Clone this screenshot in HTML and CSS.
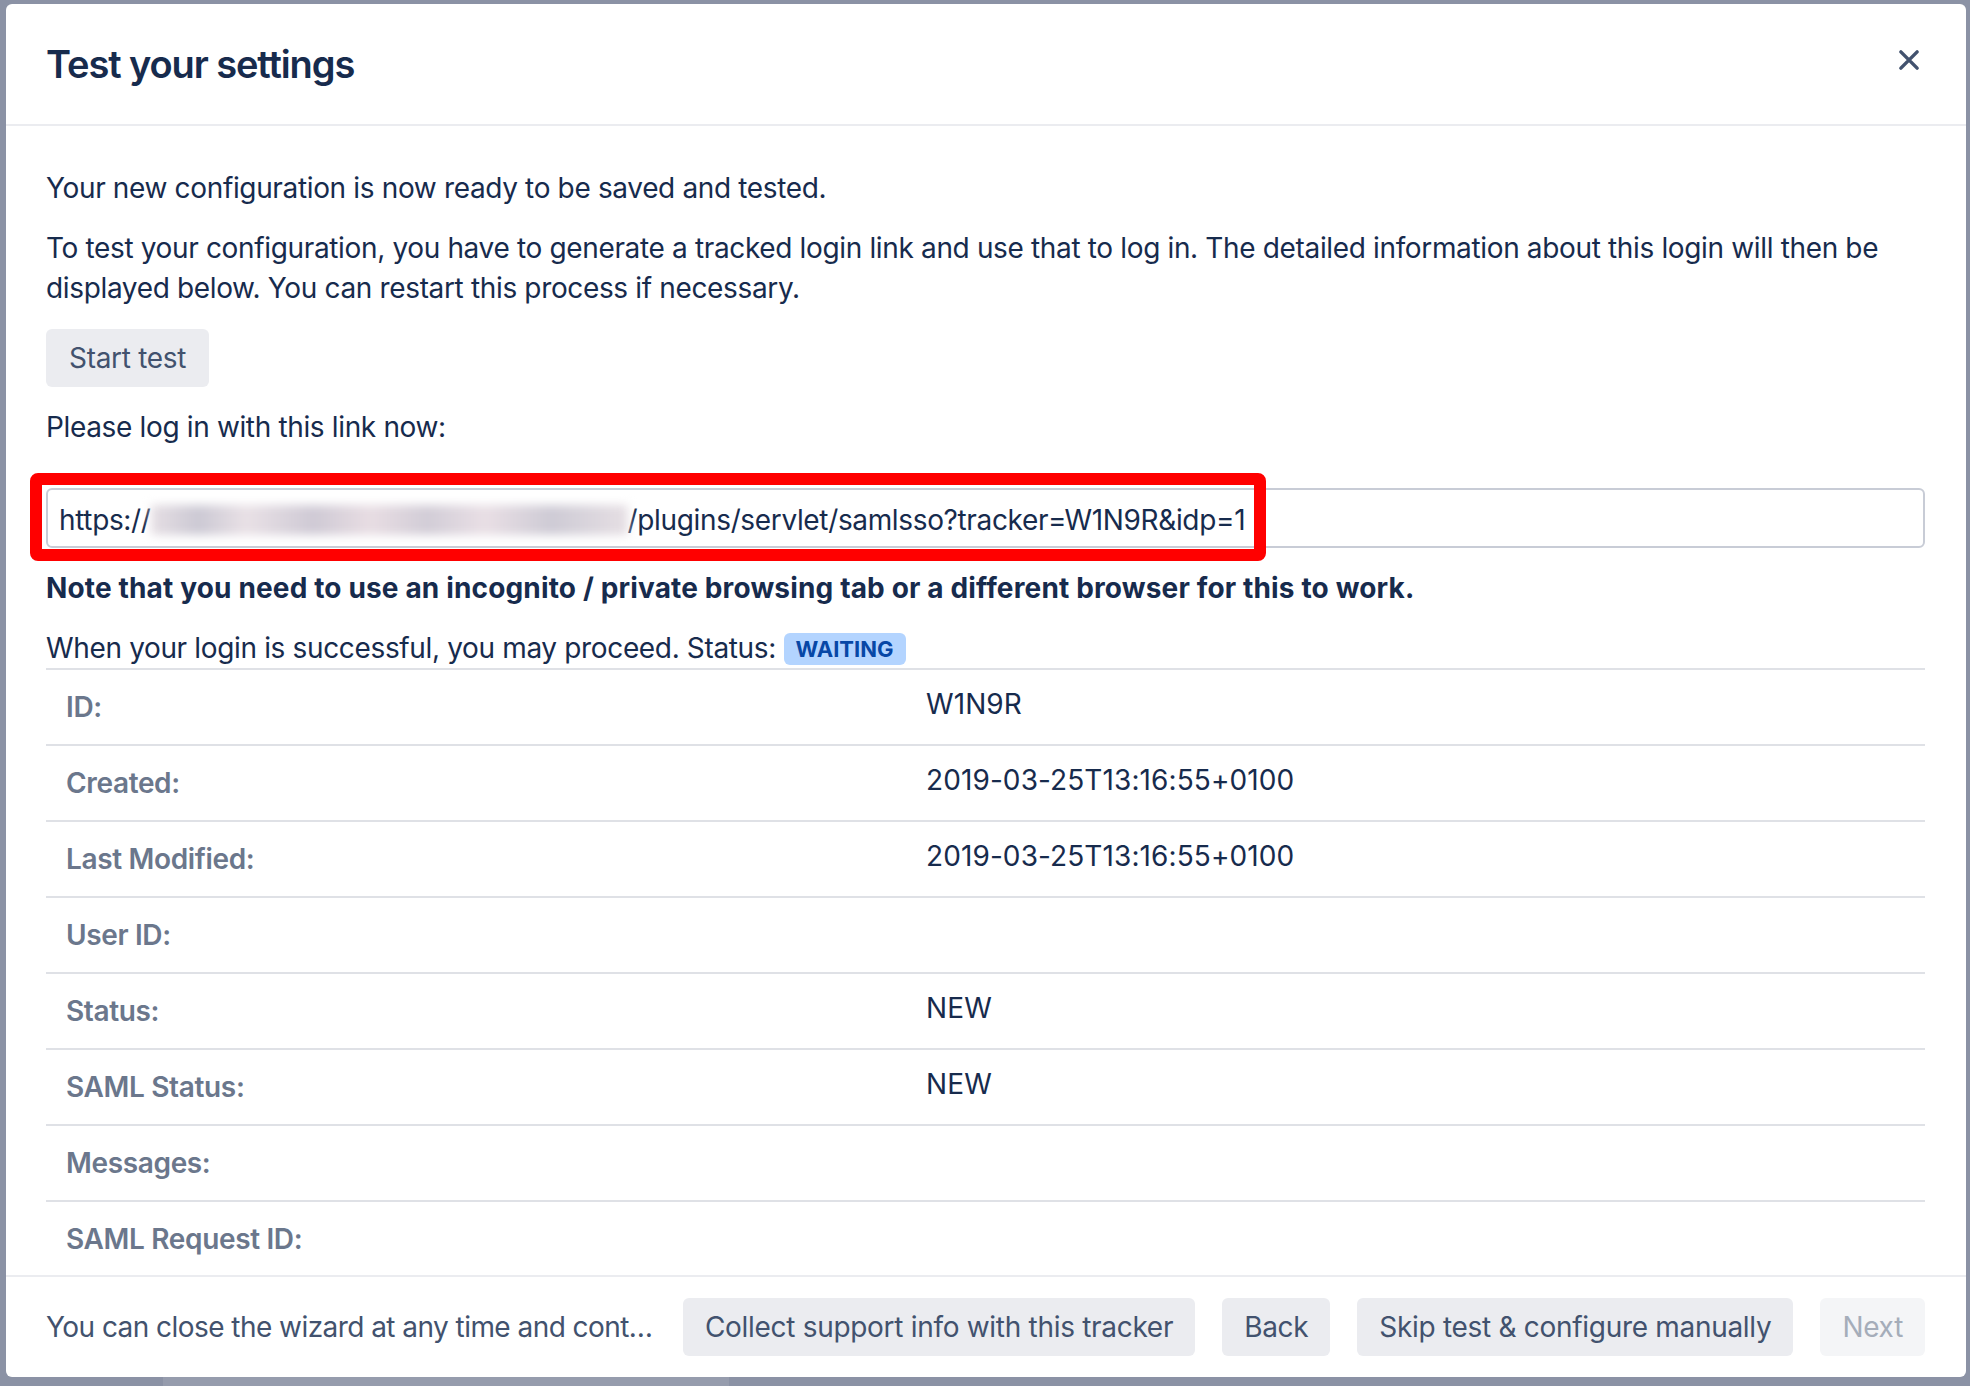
FILE: index.html
```html
<!DOCTYPE html>
<html lang="en">
<head>
  <meta charset="UTF-8">
  <title>Test your settings</title>
  <link rel="stylesheet" href="styles.css">
</head>
<body>

<div class="backdrop">
  <div class="page-strip"></div>
</div>

<div class="dialog">
  <div class="dialog-header">
    <h2>Test your settings</h2>
    <button class="close" type="button">
      <svg width="30" height="30" viewBox="0 0 24 24"><path d="M5.5 5.5 L18.5 18.5 M18.5 5.5 L5.5 18.5" stroke="#42526e" stroke-width="2.8" stroke-linecap="round" fill="none"/></svg>
    </button>
  </div>

  <div class="dialog-body">
    <p>Your new configuration is now ready to be saved and tested.</p>
    <p>To test your configuration, you have to generate a tracked login link and use that to log in. The detailed information about this login will then be displayed below. You can restart this process if necessary.</p>
    <div class="row-btn"><button class="btn" type="button">Start test</button></div>
    <p>Please log in with this link now:</p>

    <div class="field-wrap">
      <div class="field">https://<span class="blurred"></span>/plugins/servlet/samlsso?tracker=W1N9R&amp;idp=1</div>
      <div class="highlight"></div>
    </div>

    <p class="note">Note that you need to use an incognito / private browsing tab or a different browser for this to work.</p>
    <p>When your login is successful, you may proceed. Status: <span class="lozenge">Waiting</span></p>

    <table class="details">
      <tr><th>ID:</th><td>W1N9R</td></tr>
      <tr><th>Created:</th><td>2019-03-25T13:16:55+0100</td></tr>
      <tr><th>Last Modified:</th><td>2019-03-25T13:16:55+0100</td></tr>
      <tr><th>User ID:</th><td></td></tr>
      <tr><th>Status:</th><td>NEW</td></tr>
      <tr><th>SAML Status:</th><td>NEW</td></tr>
      <tr><th>Messages:</th><td></td></tr>
      <tr><th>SAML Request ID:</th><td></td></tr>
    </table>
  </div>

  <div class="dialog-footer">
    <div class="hint">You can close the wizard at any time and continue later where you left off.</div>
    <div class="actions">
      <button class="btn" type="button">Collect support info with this tracker</button>
      <button class="btn" type="button">Back</button>
      <button class="btn" type="button">Skip test &amp; configure manually</button>
      <button class="btn disabled" type="button">Next</button>
    </div>
  </div>
</div>

</body>
</html>
```

FILE: styles.css
```css
* {
  box-sizing: border-box;
}

html, body {
  margin: 0;
  padding: 0;
  height: 100%;
  overflow: hidden;
  font-family: Inter, "Liberation Sans", sans-serif;
  font-size: 28px;
  line-height: 40px;
  color: #172b4d;
  letter-spacing: -0.35px;
}

.backdrop {
  height: 100%;
  background: #8b92a5;
}

.page-strip {
  position: absolute;
  left: 163px;
  bottom: 0;
  width: 566px;
  height: 10px;
  background: #969cad;
}

.dialog {
  position: absolute;
  top: 4px;
  left: 6px;
  width: 1960px;
  height: 1373px;
  background: #fff;
  border-radius: 6px;
  display: flex;
  flex-direction: column;
  overflow: hidden;
}

.dialog-header {
  height: 122px;
  flex: none;
  display: flex;
  align-items: center;
  justify-content: space-between;
  padding: 0 37px 0 40px;
  border-bottom: 2px solid #ebecf0;
}

.dialog-header h2 {
  margin: 0;
  font-size: 38px;
  font-weight: 600;
  letter-spacing: -1.1px;
  color: #172b4d;
}

.close {
  width: 40px;
  height: 40px;
  margin-bottom: 8px;
  border: none;
  background: none;
  padding: 0;
  display: flex;
  align-items: center;
  justify-content: center;
}

.dialog-body {
  flex: 1;
  overflow: hidden;
  padding: 42px 41px 0 40px;
}

.dialog-body p {
  margin: 20px 0 0;
}

.dialog-body p:first-child {
  margin-top: 0;
}

.btn {
  font-family: inherit;
  font-size: 28px;
  letter-spacing: -0.3px;
  color: #42526e;
  background: #ebecf0;
  border: none;
  border-radius: 6px;
  height: 58px;
  padding: 0 23px;
  white-space: nowrap;
}

.btn.disabled {
  background: #f4f5f7;
  color: #a5adba;
}

.row-btn {
  margin-top: 21px;
}

.field-wrap {
  position: relative;
  margin-top: 41px;
}

.field {
  height: 60px;
  border: 2px solid #c8ccd6;
  border-radius: 6px;
  padding: 4px 11px 0;
  display: flex;
  align-items: center;
  white-space: nowrap;
}

.blurred {
  display: inline-block;
  width: 477px;
  height: 30px;
  background: linear-gradient(90deg, #e6dfe4 0%, #ccc9d4 10%, #e9e1e6 20%, #cfcad5 34%, #e8dde3 46%, #d2cdd7 58%, #e9dfe5 70%, #cecbd5 84%, #e6dfe4 100%);
  filter: blur(5px);
}

.highlight {
  position: absolute;
  left: -16px;
  top: -15px;
  width: 1236px;
  height: 88px;
  border: 12px solid #ff0000;
  border-radius: 8px;
  pointer-events: none;
}

.dialog-body p.note {
  font-weight: 700;
  letter-spacing: 0.15px;
}

.lozenge {
  display: inline-block;
  padding: 0 12px;
  height: 32px;
  line-height: 32px;
  border-radius: 6px;
  background: #b3d4ff;
  color: #0747a6;
  font-size: 22px;
  font-weight: 700;
  text-transform: uppercase;
  letter-spacing: 0;
  vertical-align: 1px;
}

.details {
  width: 100%;
  border-collapse: collapse;
  border-top: 2px solid #dfe1e6;
}

.details tr {
  border-bottom: 2px solid #dfe1e6;
}

.details th {
  width: 860px;
  text-align: left;
  font-weight: 600;
  color: #6b778c;
  padding: 17px 20px;
  vertical-align: top;
}

.details td {
  padding: 14px 20px 20px;
  vertical-align: top;
  height: 74px;
  letter-spacing: 0.1px;
}

.dialog-footer {
  flex: none;
  height: 102px;
  border-top: 2px solid #ebecf0;
  display: flex;
  align-items: center;
  gap: 28px;
  padding: 0 41px 0 40px;
}

.hint {
  flex: 1;
  min-width: 0;
  white-space: nowrap;
  overflow: hidden;
  text-overflow: ellipsis;
  color: #42526e;
  letter-spacing: -0.55px;
}

.actions {
  flex: none;
  display: flex;
  gap: 27px;
}

.actions .btn {
  padding: 0 22px;
}
```
